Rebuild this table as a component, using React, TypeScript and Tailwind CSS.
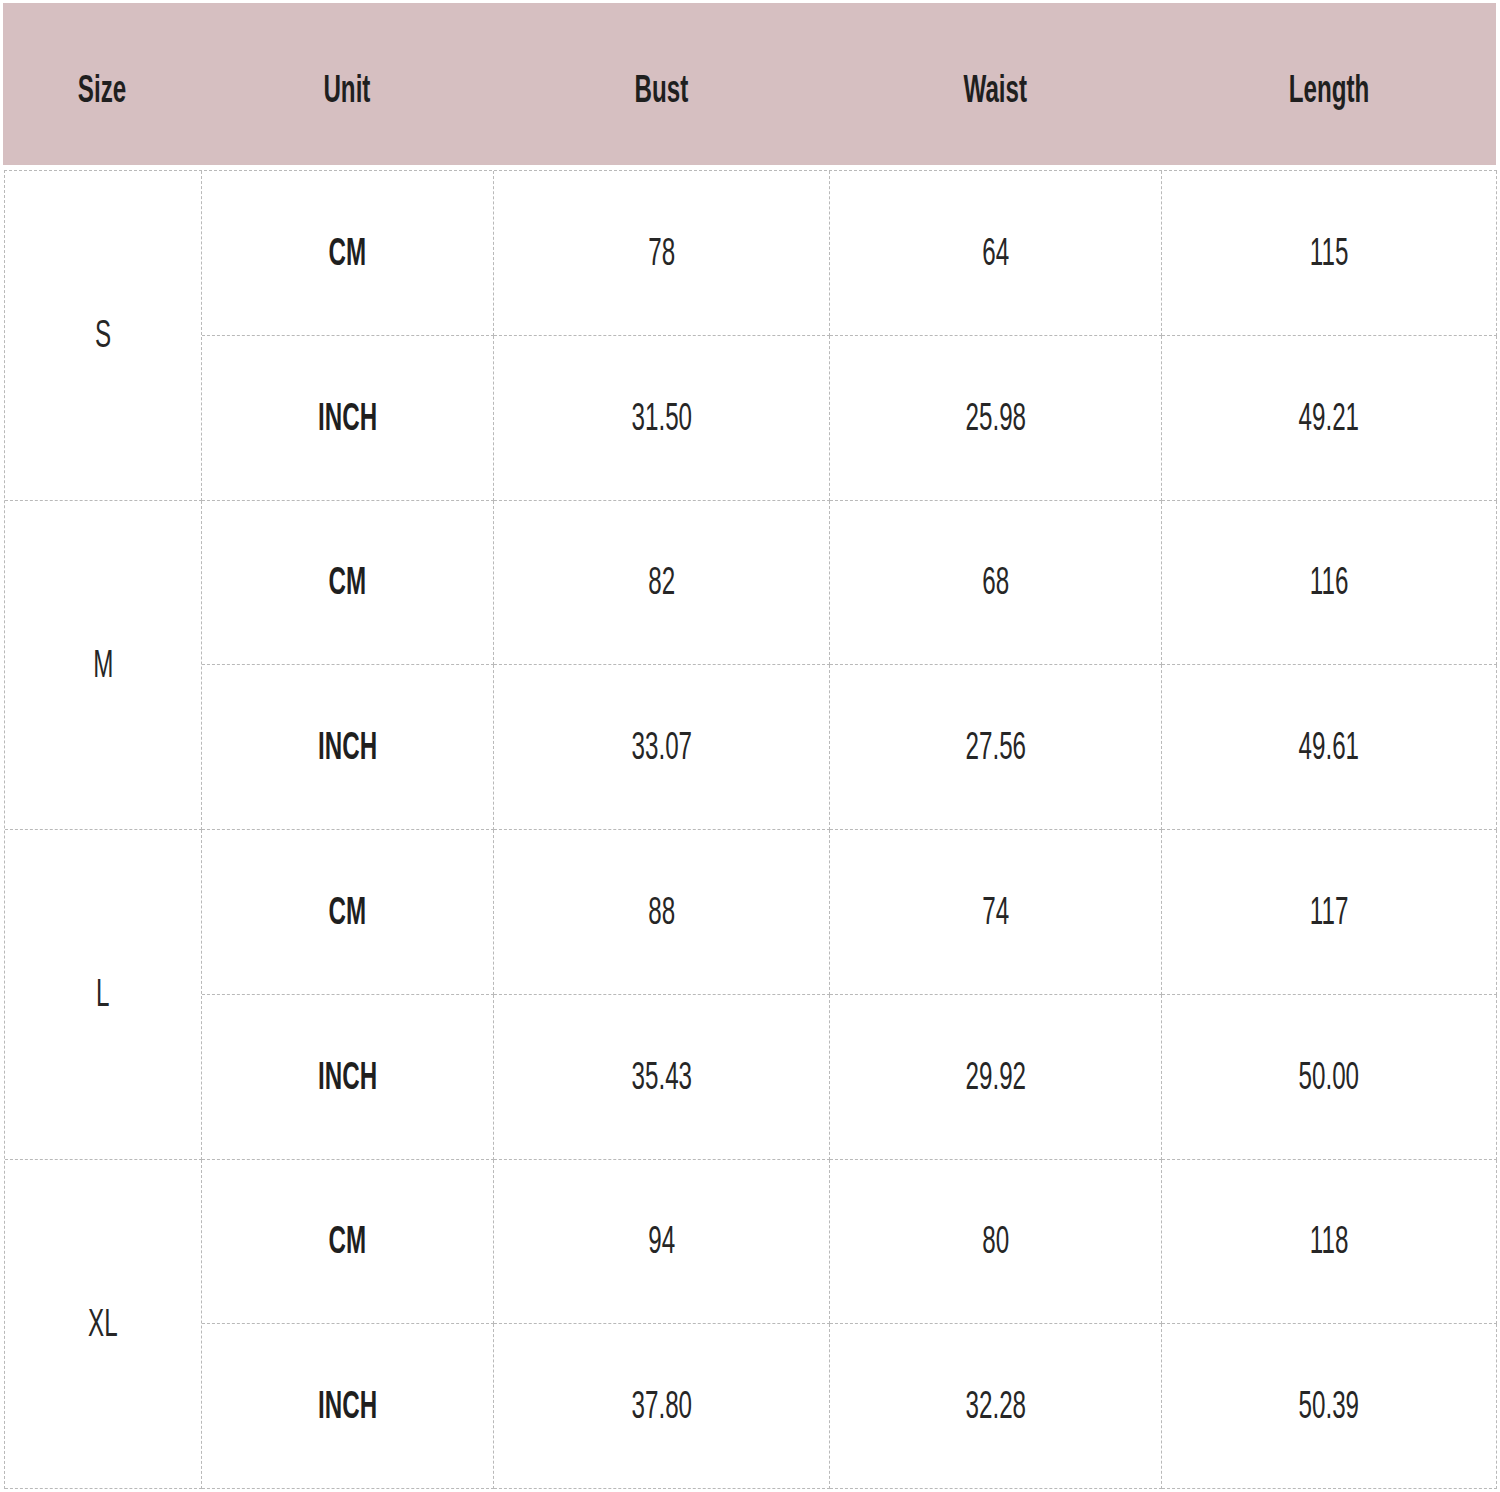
import React from "react";

const rows = [
  { size: "S", cm: ["78", "64", "115"], inch: ["31.50", "25.98", "49.21"] },
  { size: "M", cm: ["82", "68", "116"], inch: ["33.07", "27.56", "49.61"] },
  { size: "L", cm: ["88", "74", "117"], inch: ["35.43", "29.92", "50.00"] },
  { size: "XL", cm: ["94", "80", "118"], inch: ["37.80", "32.28", "50.39"] },
];

function T({ children, bold }: { children: React.ReactNode; bold?: boolean }) {
  return (
    <span
      className={`inline-block scale-x-[0.62] text-[39px] leading-none whitespace-nowrap ${
        bold ? "font-bold text-[#1f1f1f]" : "font-normal text-[#262626]"
      }`}
    >
      {children}
    </span>
  );
}

const cell = "flex items-center justify-center pb-[3px] border-r border-b border-dashed border-[#b9b9b9]";

export default function App() {
  const headers = ["Size", "Unit", "Bust", "Waist", "Length"];
  return (
    <div
      className="w-[1500px] h-[1492px] bg-white pt-[3px] pl-[3px]"
      style={{ fontFamily: '"Liberation Sans", Arial, sans-serif' }}
    >
      <div className="w-[1493px] h-[162px] bg-[#d6bfc1] grid grid-cols-[198px_292px_336px_332px_335px]">
        {headers.map((h) => (
          <div key={h} className="flex items-center justify-center pt-2">
            <T bold>{h}</T>
          </div>
        ))}
      </div>
      <div className="h-[5px]" />
      <div className="ml-px w-[1493px] grid grid-cols-[197px_292px_336px_332px_335px] grid-rows-[repeat(8,164.75px)] border-l border-t border-dashed border-[#b9b9b9]">
        {rows.map((r) => (
          <React.Fragment key={r.size}>
            <div className={`${cell} row-span-2`}>
              <T>{r.size}</T>
            </div>
            <div className={cell}>
              <T bold>CM</T>
            </div>
            {r.cm.map((v, i) => (
              <div key={"c" + i} className={cell}>
                <T>{v}</T>
              </div>
            ))}
            <div className={cell}>
              <T bold>INCH</T>
            </div>
            {r.inch.map((v, i) => (
              <div key={"i" + i} className={cell}>
                <T>{v}</T>
              </div>
            ))}
          </React.Fragment>
        ))}
      </div>
    </div>
  );
}
